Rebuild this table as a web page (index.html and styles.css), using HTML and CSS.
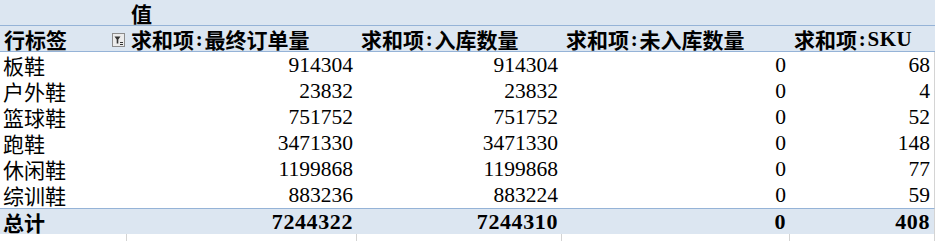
FILE: index.html
```html
<!DOCTYPE html>
<html lang="zh-CN">
<head>
<meta charset="utf-8">
<title>数据透视表</title>
<link rel="stylesheet" href="styles.css">
</head>
<body>
<div class="sheet">
  <div class="row head head1">
    <div class="cell"></div>
    <div class="cell title">值</div>
    <div class="cell"></div>
    <div class="cell"></div>
    <div class="cell last"></div>
  </div>
  <div class="row head head2">
    <div class="cell label-head">
      <span class="title">行标签</span>
      <span class="filter">
        <svg width="13" height="14" viewBox="0 0 13 14">
          <rect x="0.5" y="0.5" width="12" height="13" fill="#ececec" stroke="#8c8c8c"/>
          <path d="M2.5 3.5 H8.5 L6.3 6.5 V10.5 L4.7 10.5 V6.5 Z" fill="#333"/>
          <path d="M8 9.5 H11 M8 11.5 H11" stroke="#333" stroke-width="1"/>
        </svg>
      </span>
    </div>
    <div class="cell title">求和项<span class="colon">:</span>最终订单量</div>
    <div class="cell title">求和项<span class="colon">:</span>入库数量</div>
    <div class="cell title">求和项<span class="colon">:</span>未入库数量</div>
    <div class="cell title last">求和项<span class="colon">:</span><span class="latin">SKU</span></div>
  </div>
  <div class="row data">
    <div class="cell label">板鞋</div>
    <div class="cell num">914304</div>
    <div class="cell num">914304</div>
    <div class="cell num">0</div>
    <div class="cell num last">68</div>
  </div>
  <div class="row data">
    <div class="cell label">户外鞋</div>
    <div class="cell num">23832</div>
    <div class="cell num">23832</div>
    <div class="cell num">0</div>
    <div class="cell num last">4</div>
  </div>
  <div class="row data">
    <div class="cell label">篮球鞋</div>
    <div class="cell num">751752</div>
    <div class="cell num">751752</div>
    <div class="cell num">0</div>
    <div class="cell num last">52</div>
  </div>
  <div class="row data">
    <div class="cell label">跑鞋</div>
    <div class="cell num">3471330</div>
    <div class="cell num">3471330</div>
    <div class="cell num">0</div>
    <div class="cell num last">148</div>
  </div>
  <div class="row data">
    <div class="cell label">休闲鞋</div>
    <div class="cell num">1199868</div>
    <div class="cell num">1199868</div>
    <div class="cell num">0</div>
    <div class="cell num last">77</div>
  </div>
  <div class="row data">
    <div class="cell label">综训鞋</div>
    <div class="cell num">883236</div>
    <div class="cell num">883224</div>
    <div class="cell num">0</div>
    <div class="cell num last">59</div>
  </div>
  <div class="row total">
    <div class="cell label title">总计</div>
    <div class="cell num">7244322</div>
    <div class="cell num">7244310</div>
    <div class="cell num">0</div>
    <div class="cell num last">408</div>
  </div>
  <div class="row filler">
    <div class="cell"></div>
    <div class="cell"></div>
    <div class="cell"></div>
    <div class="cell"></div>
    <div class="cell last"></div>
  </div>
</div>
</body>
</html>
```

FILE: styles.css
```css
html, body {
  margin: 0;
  padding: 0;
  background: #ffffff;
}

body {
  font-family: "Noto Sans CJK SC", "Noto Sans", sans-serif;
  font-size: 21px;
  color: #000;
  width: 938px;
  height: 241px;
  overflow: hidden;
}

.sheet {
  display: flex;
  flex-direction: column;
  width: 938px;
}

.row {
  display: grid;
  grid-template-columns: 127px 230px 205px 228px 145px 3px;
  height: 26px;
  box-sizing: border-box;
}

.cell {
  display: flex;
  align-items: center;
  box-sizing: border-box;
  white-space: nowrap;
  line-height: 1;
  padding-top: 1px;
}

.head .cell {
  background: #dce6f1;
  border-bottom: 1px solid #95b3d7;
  padding-left: 4px;
}

.head .cell.last {
  border-right: none;
}

.title {
  font-weight: 700;
}

.label-head {
  justify-content: space-between;
  padding-right: 2px;
}

.label-head .filter {
  display: flex;
  margin-top: 2px;
}

.colon {
  display: inline-block;
  width: 0.5em;
  text-align: center;
  font-family: "Liberation Serif", serif;
}

.latin {
  font-family: "Liberation Serif", serif;
  font-weight: 700;
  letter-spacing: 0.5px;
}

.label {
  padding-left: 3px;
}

.num {
  justify-content: flex-end;
  padding-right: 4px;
  font-family: "Liberation Serif", serif;
  font-size: 21.5px;
}

.data .cell.last,
.total .cell.last,
.filler .cell.last {
  border-right: 1px solid #d4d4d4;
}

.total .cell {
  background: #dce6f1;
  border-top: 1px solid #95b3d7;
}

.total .num {
  font-weight: 700;
  font-size: 22px;
  letter-spacing: 0.6px;
}

.total .cell.last {
  background: #dce6f1;
}

.filler {
  height: 7px;
}

.filler .cell {
  border-right: 1px solid #d4d4d4;
}
```
